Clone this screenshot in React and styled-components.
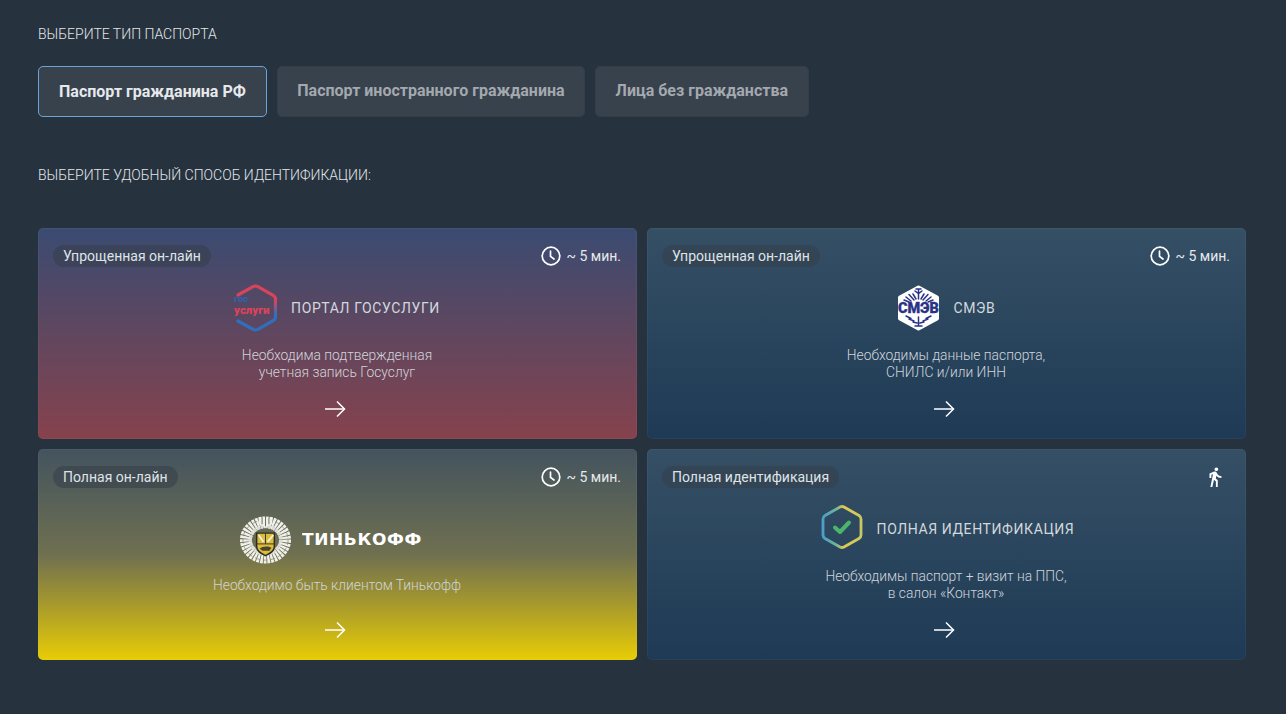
import React from "react";
import styled, { createGlobalStyle } from "styled-components";
import { MdDirectionsWalk } from "react-icons/md";

const GlobalStyle = createGlobalStyle`
  html, body {
    margin: 0;
    padding: 0;
    background: #26323e;
  }
  body {
    font-family: Roboto, "Liberation Sans", sans-serif;
    color: #e4e8ec;
  }
`;

const Page = styled.div`
  box-sizing: border-box;
  width: 1286px;
  height: 714px;
  padding: 26px 40px 0 38px;
  overflow: hidden;
`;

const Heading = styled.div`
  font-size: 14px;
  font-weight: 300;
  line-height: 16px;
  color: #e2e6ea;
  text-transform: uppercase;
`;

const Tabs = styled.div`
  display: flex;
  gap: 10px;
  margin-top: 24px;
`;

const Tab = styled.button`
  box-sizing: border-box;
  height: 51px;
  padding: ${(p) => (p.$active ? "0 20px" : "0 19.5px 2px")};
  border: 1px solid ${(p) => (p.$active ? "#6ea3d8" : "#343e49")};
  border-radius: 5px;
  background: #38424d;
  color: ${(p) => (p.$active ? "#e6e9ec" : "#a3a9af")};
  font-family: inherit;
  font-size: 16px;
  font-weight: 700;
  cursor: pointer;
`;

const SubHeading = styled(Heading)`
  margin-top: 50px;
`;

const Grid = styled.div`
  display: grid;
  grid-template-columns: 599px 599px;
  grid-auto-rows: 211px;
  gap: 10px;
  margin-top: 45px;
`;

const Card = styled.div`
  box-sizing: border-box;
  display: flex;
  flex-direction: column;
  padding: 16px 15px 20px 14px;
  border-radius: 5px;
  border: 1px solid rgba(255, 255, 255, 0.04);
  background: ${(p) => p.$bg};
  background-origin: border-box;
`;

const CardTop = styled.div`
  display: flex;
  justify-content: space-between;
  align-items: center;
  height: 22px;
`;

const Pill = styled.span`
  padding: 0 10px;
  height: 22px;
  line-height: 22px;
  border-radius: 11px;
  background: rgba(52, 62, 73, 0.55);
  color: #dfe3e7;
  font-size: 14px;
`;

const Time = styled.span`
  display: flex;
  align-items: center;
  gap: 5px;
  color: #e6e9ec;
  font-size: 14px;
`;

const CardBody = styled.div`
  flex: 1;
  display: flex;
  flex-direction: column;
  align-items: center;
  justify-content: center;
  padding-bottom: 2px;
`;

const LogoRow = styled.div`
  display: flex;
  align-items: center;
  gap: 14px;
  height: 50px;

  > svg {
    margin-bottom: 3px;
  }
`;

const BrandRow = styled(LogoRow)`
  gap: 10px;
  margin-right: 19px;

  > svg {
    margin-bottom: 0;
  }
`;

const LogoTitle = styled.span`
  margin-bottom: 2px;
  color: #d3d8dd;
  font-size: 14px;
  letter-spacing: 0.6px;
  text-transform: uppercase;
`;

const BrandName = styled.span`
  margin-top: 2px;
  color: #fff;
  font-family: "DejaVu Sans", sans-serif;
  font-size: 16px;
  font-weight: 700;
  letter-spacing: 0.6px;
  transform: scaleX(1.06);
  transform-origin: left center;
`;

const Description = styled.div`
  margin-top: 13px;
  color: #d0d5da;
  font-size: 13.8px;
  font-weight: 300;
  line-height: 17px;
  text-align: center;
`;

const ArrowWrap = styled.div`
  display: flex;
  justify-content: center;
  height: 18px;
  padding-right: 5px;
`;

const WalkIcon = styled(MdDirectionsWalk)`
  color: #fff;
  margin-right: 4px;
`;

const ClockIcon = () => (
  <svg width="20" height="20" viewBox="0 0 20 20" fill="none" stroke="#fff" strokeWidth="1.7" strokeLinecap="round">
    <circle cx="10" cy="10" r="8.8" />
    <path d="M9.5 5.2V10.4L13 13" />
  </svg>
);

const Arrow = () => (
  <svg width="22" height="18" viewBox="0 0 22 18" fill="none" stroke="#fff" strokeWidth="1.5">
    <path d="M1 9H20.5" />
    <path d="M13 1.5L20.5 9L13 16.5" />
  </svg>
);

const GosuslugiLogo = () => (
  <svg width="43" height="48" viewBox="0 0 43 48" fill="none">
    <defs>
      <linearGradient id="gos" x1="0" y1="0" x2="0" y2="1">
        <stop offset="0.35" stopColor="#d8445a" />
        <stop offset="0.65" stopColor="#2f6fc0" />
      </linearGradient>
    </defs>
    <path
      d="M4 11L19 2.6Q21.5 1.4 24 2.6L39.5 11.5Q41.5 13 41.5 15V33Q41.5 35 39.5 36.5L24 45.4Q21.5 46.6 19 45.4L4 37"
      stroke="url(#gos)"
      strokeWidth="3.2"
      strokeLinecap="round"
    />
    <text x="0" y="18" fontFamily="Roboto, sans-serif" fontSize="9.5" fontWeight="900" fill="#2f62ad">гос</text>
    <text x="0" y="30" fontFamily="Roboto, sans-serif" fontSize="11.5" fontWeight="900" fill="#d8445a">услуги</text>
  </svg>
);

const SmevLogo = () => (
  <svg width="43" height="46" viewBox="0 0 43 46">
    <path d="M21.5 2.5L40 12.5V33.5L21.5 43.5L3 33.5V12.5Z" fill="#fff" stroke="#fff" strokeWidth="4" strokeLinejoin="round" />
    <g stroke="#2b3286" strokeWidth="1.5" fill="none" strokeLinecap="round">
      <path d="M18 6L21.5 8.5L25 6M19 4H24M21.5 4V14" />
      <path d="M7 15L12 17M36 15L31 17M9 12L14 16M34 12L29 16M12 9.5L17 15M31 9.5L26 15M16 9L19 14M27 9L24 14" />
      <path d="M9 31L14 33.5M34 31L29 33.5M12 34L17 36M31 34L26 36M16 37L20 38M27 37L23 38M21.5 32V41M18 41H25" />
    </g>
    <text x="21.5" y="28" textAnchor="middle" fontFamily="Roboto, sans-serif" fontSize="14.5" fontWeight="900" fill="#2b3286" stroke="#2b3286" strokeWidth="0.3">СМЭВ</text>
  </svg>
);

const TinkoffCrest = () => (
  <svg width="53" height="50" viewBox="0 0 54 50" fill="none">
    {/* lace of the crest: tight hatched rings, then the crown and the shield */}
    <ellipse cx="27" cy="26" rx="20" ry="18" stroke="#f1f1ec" strokeWidth="12" strokeDasharray="2.4 0.8" />
    <ellipse cx="27" cy="26" rx="15.5" ry="14" stroke="#dcdcd4" strokeWidth="3.5" strokeDasharray="3 1" />
    <ellipse cx="27" cy="26" rx="23" ry="20.5" stroke="#8b8b7a" strokeWidth="0.8" strokeDasharray="5 3" />
    <path d="M20 3H34V10L27 13L20 10Z" fill="#f1f1ec" />
    <path d="M23.5 3V10M27 2V12M30.5 3V10" stroke="#6a6a58" strokeWidth="1" />
    <path d="M18 19H36V33C36 38 31 40 27 42C23 40 18 38 18 33Z" fill="#dcbc3a" stroke="#2c2c26" strokeWidth="1.5" />
    <path d="M27 19V30M18 30H36" stroke="#3a3a2c" strokeWidth="1" />
    <path d="M20 21L25 28M29 28L35 21" stroke="#f4efd8" strokeWidth="1.8" />
    <path d="M21 35C24 32 30 32 33 34L31 37H24Z" fill="#4a452a" />
  </svg>
);

const FullLogo = () => (
  <svg width="45" height="50" viewBox="-3 0 45 50" fill="none">
    <defs>
      <linearGradient id="full" x1="0" y1="0" x2="1" y2="0">
        <stop offset="0" stopColor="#4b9fc8" />
        <stop offset="0.35" stopColor="#6fb59a" />
        <stop offset="0.55" stopColor="#e3c94f" />
        <stop offset="1" stopColor="#c9c860" />
      </linearGradient>
    </defs>
    <path
      d="M19 3Q21 2 23 3L38 11.5Q40 12.8 40 15V31Q40 33.2 38 34.5L23 43Q21 44 19 43L4 34.5Q2 33.2 2 31V15Q2 12.8 4 11.5Z"
      stroke="url(#full)"
      strokeWidth="2.8"
    />
    <path d="M14 23.5L19 28L28 18.5" stroke="#4cb56c" strokeWidth="4" strokeLinecap="round" strokeLinejoin="round" />
  </svg>
);

const cards = [
  {
    label: "Упрощенная он-лайн",
    bg: "linear-gradient(180deg, #3a4b71 0%, #86424d 100%)",
    logo: <GosuslugiLogo />,
    title: "Портал Госуслуги",
    text: ["Необходима подтвержденная", "учетная запись Госуслуг"],
  },
  {
    label: "Упрощенная он-лайн",
    bg: "linear-gradient(180deg, #355065 0%, #1e3a55 100%)",
    logo: <SmevLogo />,
    title: "СМЭВ",
    text: ["Необходимы данные паспорта,", "СНИЛС и/или ИНН"],
  },
  {
    label: "Полная он-лайн",
    bg: "linear-gradient(180deg, #43535f 0%, #6f7050 50%, #a3962f 72%, #e8cd05 100%)",
    brand: true,
    text: ["Необходимо быть клиентом Тинькофф"],
  },
  {
    label: "Полная идентификация",
    bg: "linear-gradient(180deg, #355065 0%, #1e3a55 100%)",
    logo: <FullLogo />,
    title: "Полная идентификация",
    text: ["Необходимы паспорт + визит на ППС,", "в салон «Контакт»"],
    walk: true,
  },
];

export default function App() {
  return (
    <>
      <GlobalStyle />
      <Page>
        <Heading>Выберите тип паспорта</Heading>
        <Tabs>
          <Tab $active>Паспорт гражданина РФ</Tab>
          <Tab>Паспорт иностранного гражданина</Tab>
          <Tab>Лица без гражданства</Tab>
        </Tabs>
        <SubHeading>Выберите удобный способ идентификации:</SubHeading>
        <Grid>
          {cards.map((card, i) => (
            <Card key={i} $bg={card.bg}>
              <CardTop>
                <Pill>{card.label}</Pill>
                {card.walk ? (
                  <WalkIcon size={22} />
                ) : (
                  <Time>
                    <ClockIcon />
                    ~ 5 мин.
                  </Time>
                )}
              </CardTop>
              <CardBody>
                {card.brand ? (
                  <BrandRow>
                    <TinkoffCrest />
                    <BrandName>ТИНЬКОФФ</BrandName>
                  </BrandRow>
                ) : (
                  <LogoRow>
                    {card.logo}
                    <LogoTitle>{card.title}</LogoTitle>
                  </LogoRow>
                )}
                <Description>
                  {card.text.map((line) => (
                    <div key={line}>{line}</div>
                  ))}
                </Description>
              </CardBody>
              <ArrowWrap>
                <Arrow />
              </ArrowWrap>
            </Card>
          ))}
        </Grid>
      </Page>
    </>
  );
}
